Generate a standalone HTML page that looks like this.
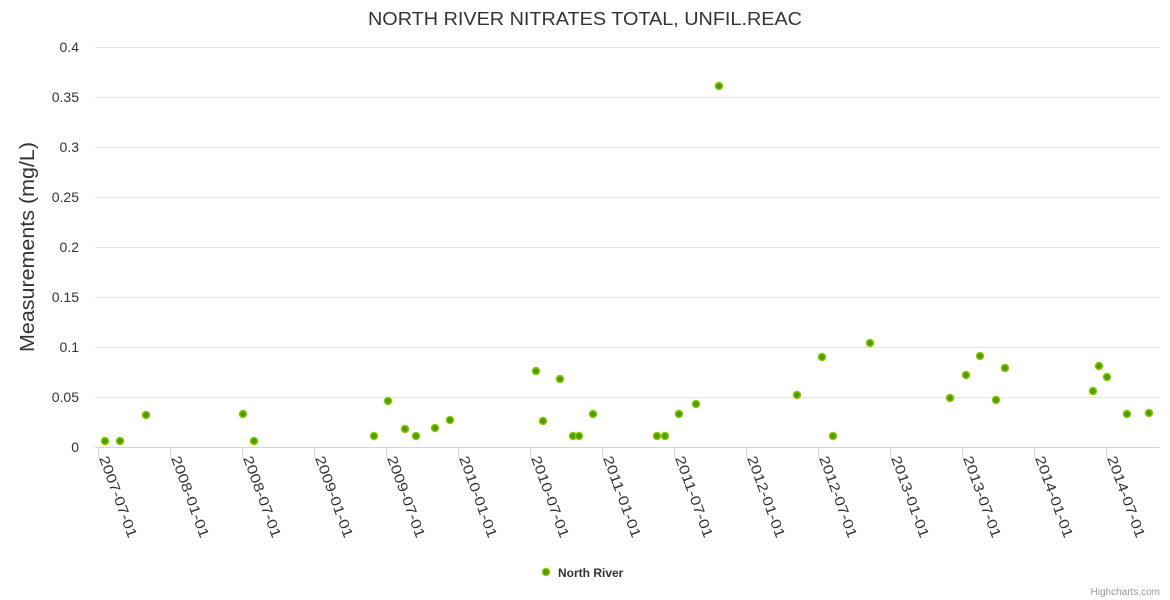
<!DOCTYPE html>
<html><head><meta charset="utf-8"><style>
html,body{margin:0;padding:0;background:#fff;}
svg{display:block;font-family:"Liberation Sans",sans-serif;}
</style></head><body>
<svg width="1170" height="600" xmlns="http://www.w3.org/2000/svg">
<text x="368" y="25" textLength="434" lengthAdjust="spacingAndGlyphs" font-size="18" fill="#333">NORTH RIVER NITRATES TOTAL, UNFIL.REAC</text>
<g stroke="#e6e6e6" stroke-width="1">
<line x1="95" y1="47.5" x2="1160" y2="47.5"/>
<line x1="95" y1="97.5" x2="1160" y2="97.5"/>
<line x1="95" y1="147.5" x2="1160" y2="147.5"/>
<line x1="95" y1="197.5" x2="1160" y2="197.5"/>
<line x1="95" y1="247.5" x2="1160" y2="247.5"/>
<line x1="95" y1="297.5" x2="1160" y2="297.5"/>
<line x1="95" y1="347.5" x2="1160" y2="347.5"/>
<line x1="95" y1="397.5" x2="1160" y2="397.5"/>
</g>
<line x1="95" y1="447.5" x2="1160" y2="447.5" stroke="#ccd6eb"/>
<g font-size="14" fill="#333" text-anchor="end">
<text x="79" y="52">0.4</text><text x="79" y="102">0.35</text><text x="79" y="152">0.3</text>
<text x="79" y="202">0.25</text><text x="79" y="252">0.2</text><text x="79" y="302">0.15</text>
<text x="79" y="352">0.1</text><text x="79" y="402">0.05</text><text x="79" y="452">0</text>
</g>
<text transform="translate(34,352) rotate(-90)" textLength="210" lengthAdjust="spacingAndGlyphs" font-size="20" fill="#333">Measurements (mg/L)</text>
<g stroke="#ccd6eb">
<line x1="98.5" y1="447" x2="98.5" y2="457"/><line x1="170.5" y1="447" x2="170.5" y2="457"/>
<line x1="242.5" y1="447" x2="242.5" y2="457"/><line x1="314.5" y1="447" x2="314.5" y2="457"/>
<line x1="386.5" y1="447" x2="386.5" y2="457"/><line x1="458.5" y1="447" x2="458.5" y2="457"/>
<line x1="530.5" y1="447" x2="530.5" y2="457"/><line x1="602.5" y1="447" x2="602.5" y2="457"/>
<line x1="674.5" y1="447" x2="674.5" y2="457"/><line x1="746.5" y1="447" x2="746.5" y2="457"/>
<line x1="818.5" y1="447" x2="818.5" y2="457"/><line x1="890.5" y1="447" x2="890.5" y2="457"/>
<line x1="962.5" y1="447" x2="962.5" y2="457"/><line x1="1034.5" y1="447" x2="1034.5" y2="457"/>
<line x1="1106.5" y1="447" x2="1106.5" y2="457"/>
</g>
<g font-size="14" fill="#333">
<text transform="translate(99,458) rotate(70)" textLength="86" lengthAdjust="spacingAndGlyphs">2007-07-01</text>
<text transform="translate(171,458) rotate(70)" textLength="86" lengthAdjust="spacingAndGlyphs">2008-01-01</text>
<text transform="translate(243,458) rotate(70)" textLength="86" lengthAdjust="spacingAndGlyphs">2008-07-01</text>
<text transform="translate(315,458) rotate(70)" textLength="86" lengthAdjust="spacingAndGlyphs">2009-01-01</text>
<text transform="translate(387,458) rotate(70)" textLength="86" lengthAdjust="spacingAndGlyphs">2009-07-01</text>
<text transform="translate(459,458) rotate(70)" textLength="86" lengthAdjust="spacingAndGlyphs">2010-01-01</text>
<text transform="translate(531,458) rotate(70)" textLength="86" lengthAdjust="spacingAndGlyphs">2010-07-01</text>
<text transform="translate(603,458) rotate(70)" textLength="86" lengthAdjust="spacingAndGlyphs">2011-01-01</text>
<text transform="translate(675,458) rotate(70)" textLength="86" lengthAdjust="spacingAndGlyphs">2011-07-01</text>
<text transform="translate(747,458) rotate(70)" textLength="86" lengthAdjust="spacingAndGlyphs">2012-01-01</text>
<text transform="translate(819,458) rotate(70)" textLength="86" lengthAdjust="spacingAndGlyphs">2012-07-01</text>
<text transform="translate(891,458) rotate(70)" textLength="86" lengthAdjust="spacingAndGlyphs">2013-01-01</text>
<text transform="translate(963,458) rotate(70)" textLength="86" lengthAdjust="spacingAndGlyphs">2013-07-01</text>
<text transform="translate(1035,458) rotate(70)" textLength="86" lengthAdjust="spacingAndGlyphs">2014-01-01</text>
<text transform="translate(1107,458) rotate(70)" textLength="86" lengthAdjust="spacingAndGlyphs">2014-07-01</text>
</g>
<g fill="#4f9a00" stroke="#8cc800" stroke-width="1.5">
<circle cx="105" cy="441" r="3.5"/><circle cx="120" cy="441" r="3.5"/><circle cx="146" cy="415" r="3.5"/>
<circle cx="243" cy="414" r="3.5"/><circle cx="254" cy="441" r="3.5"/><circle cx="374" cy="436" r="3.5"/>
<circle cx="388" cy="401" r="3.5"/><circle cx="405" cy="429" r="3.5"/><circle cx="416" cy="436" r="3.5"/>
<circle cx="435" cy="428" r="3.5"/><circle cx="450" cy="420" r="3.5"/><circle cx="536" cy="371" r="3.5"/>
<circle cx="543" cy="421" r="3.5"/><circle cx="560" cy="379" r="3.5"/><circle cx="573" cy="436" r="3.5"/>
<circle cx="579" cy="436" r="3.5"/><circle cx="593" cy="414" r="3.5"/><circle cx="657" cy="436" r="3.5"/>
<circle cx="665" cy="436" r="3.5"/><circle cx="679" cy="414" r="3.5"/><circle cx="696" cy="404" r="3.5"/>
<circle cx="719" cy="86" r="3.5"/><circle cx="797" cy="395" r="3.5"/><circle cx="822" cy="357" r="3.5"/>
<circle cx="833" cy="436" r="3.5"/><circle cx="870" cy="343" r="3.5"/><circle cx="950" cy="398" r="3.5"/>
<circle cx="966" cy="375" r="3.5"/><circle cx="980" cy="356" r="3.5"/><circle cx="996" cy="400" r="3.5"/>
<circle cx="1005" cy="368" r="3.5"/><circle cx="1093" cy="391" r="3.5"/><circle cx="1099" cy="366" r="3.5"/>
<circle cx="1107" cy="377" r="3.5"/><circle cx="1127" cy="414" r="3.5"/><circle cx="1149" cy="413" r="3.5"/>
<circle cx="546" cy="572" r="3.5"/>
</g>
<text x="558" y="577" font-size="12" font-weight="bold" fill="#333">North River</text>
<text x="1160" y="595" text-anchor="end" font-size="10" fill="#999">Highcharts.com</text>
</svg>
</body></html>
